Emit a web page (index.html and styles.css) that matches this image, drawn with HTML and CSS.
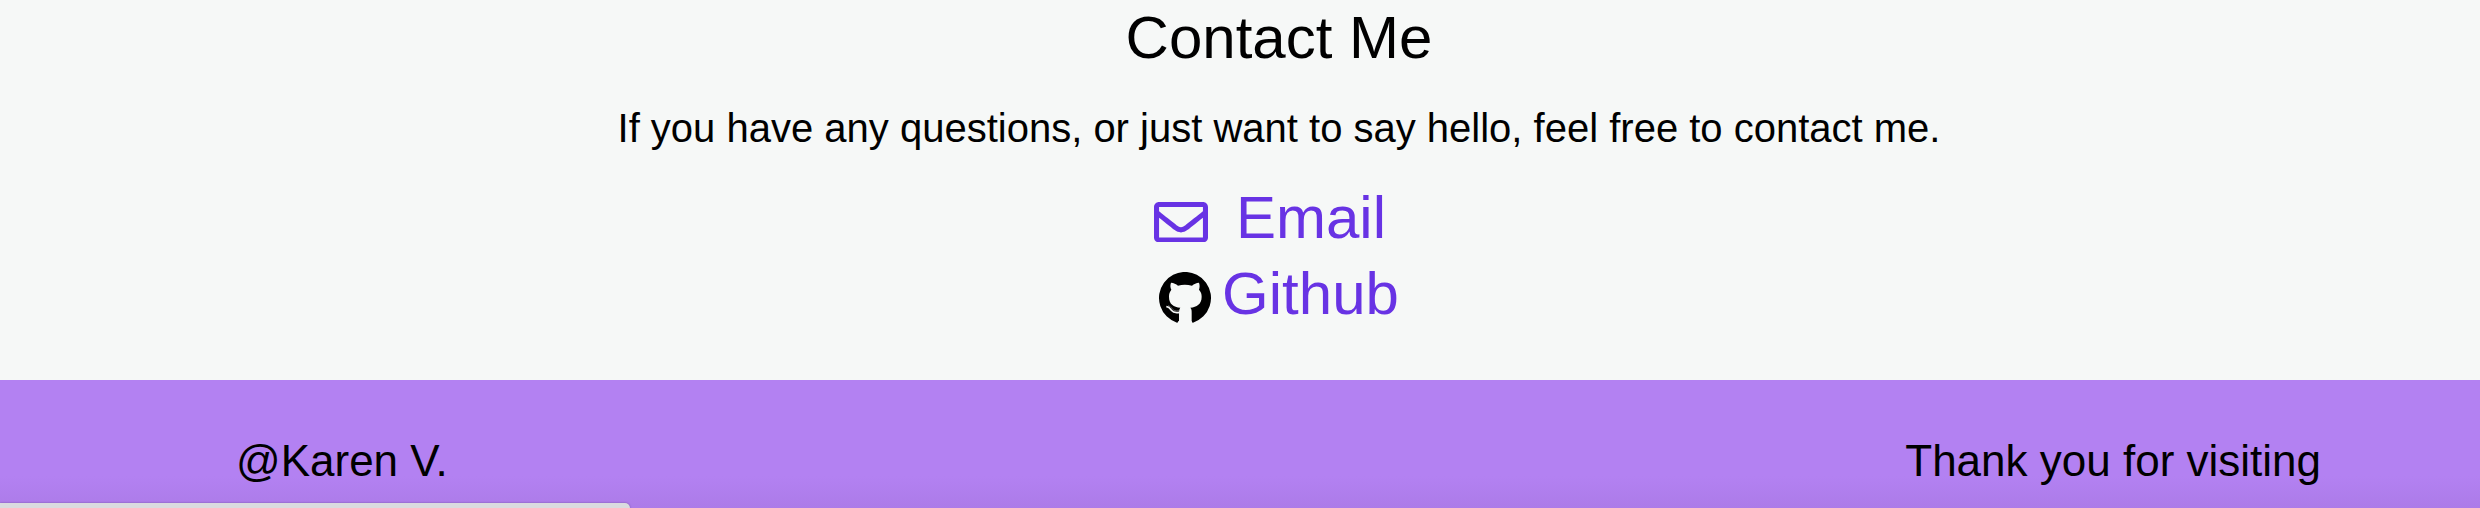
FILE: index.html
```html
<!DOCTYPE html>
<html lang="en">
<head>
<meta charset="utf-8">
<title>Contact Me</title>
<link rel="stylesheet" href="styles.css">
</head>
<body>
<main class="contact">
  <h1 class="contact-title">Contact Me</h1>
  <p class="contact-text">If you have any questions, or just want to say hello, feel free to contact me.</p>
  <ul class="contact-links">
    <li>
      <a class="contact-link email-link" href="#email">
        <svg class="email-icon" viewBox="0 64 512 384" aria-hidden="true"><path d="M464 64H48C21.49 64 0 85.49 0 112v288c0 26.51 21.49 48 48 48h416c26.51 0 48-21.49 48-48V112c0-26.51-21.49-48-48-48zm0 48v40.805c-22.422 18.259-58.168 46.651-134.587 106.49-16.841 13.247-50.201 45.072-73.413 44.701-23.208.375-56.579-31.459-73.413-44.701C106.18 199.465 70.425 171.067 48 152.805V112h416zM48 400V214.398c22.914 18.251 55.409 43.862 104.938 82.646 21.857 17.205 60.134 55.186 103.062 54.955 42.717.231 80.509-37.199 103.053-54.947 49.528-38.783 82.032-64.401 104.947-82.653V400H48z"/></svg>
        <span>Email</span>
      </a>
    </li>
    <li>
      <a class="contact-link github-link" href="#github">
        <svg class="github-icon" viewBox="0 0 156 152" aria-hidden="true">
          <path d="M54 152A78 78 0 1 1 102 152Q98 152 98 147H58Q58 152 54 152Z"/>
          <path class="github-cat" d="M36 32C44 33 51 36 57 41Q77 36 99 41C105 36 112 33 120 32C123 41 122 47 120 53C126 60 128 66 128 74C128 97 113 105 94 107C98 111 98 116 98 122V152H60V122C60 115 61 111 64 107C44 105 30 97 30 74C30 66 32 60 37 53C34 47 33 40 36 32Z"/>
          <path class="github-tail" d="M22 104C31 104 33 110 37 115C42 121 50 123 61 121"/>
          <path class="github-tail-edge" d="M27 101C38 103 38 112 45 115Q51 118 61 116"/>
        </svg>
        <span>Github</span>
      </a>
    </li>
  </ul>
</main>
<footer class="footer">
  <p>@Karen V.</p>
  <p>Thank you for visiting</p>
</footer>
<div class="status-bubble"></div>
</body>
</html>
```
FILE: styles.css
```css
* {
  box-sizing: border-box;
}

html {
  height: 100%;
}

body {
  display: flex;
  flex-direction: column;
  position: relative;
  height: 100%;
  margin: 0;
  overflow: hidden;
  background: #f6f8f7;
  color: #000;
  font-family: Arial, "Liberation Sans", sans-serif;
}

.contact {
  padding: 0 0 48px 78px;
  text-align: center;
}

.contact-title {
  margin: 0;
  font-size: 60px;
  font-weight: 400;
  line-height: 76px;
}

.contact-text {
  margin: 28px 0;
  font-size: 40px;
  line-height: 48px;
}

.contact-links {
  margin: 0;
  padding: 0;
  list-style: none;
}

.contact-links li {
  display: flex;
  justify-content: center;
}

.contact-link {
  display: flex;
  align-items: center;
  color: #6833e4;
  font-size: 60px;
  line-height: 76px;
  text-decoration: none;
}

.email-link {
  gap: 28px;
  padding-right: 18px;
}

.github-link {
  gap: 11px;
}

.email-icon {
  width: 54px;
  margin-top: 8px;
  fill: currentColor;
}

.github-icon {
  width: 52px;
  margin-top: 7px;
  fill: #000;
}

.github-icon .github-cat {
  fill: #f6f8f7;
}

.github-tail {
  fill: none;
  stroke: #f6f8f7;
  stroke-width: 5;
}

.github-tail-edge {
  fill: none;
  stroke: #888;
  stroke-width: 2;
}

.footer {
  display: flex;
  flex: 1 0 auto;
  justify-content: space-between;
  padding: 53px 159px 18px 236px;
  background: linear-gradient(#b381f2 75%, #ac7be8);
  font-size: 44px;
  line-height: 56px;
}

.footer p {
  margin: 0;
}

.status-bubble {
  position: absolute;
  bottom: 0;
  left: 0;
  width: 630px;
  height: 5px;
  border-top-right-radius: 6px;
  background: #dadbdf;
  box-shadow: 0 0 2px #7050a0;
}
```
